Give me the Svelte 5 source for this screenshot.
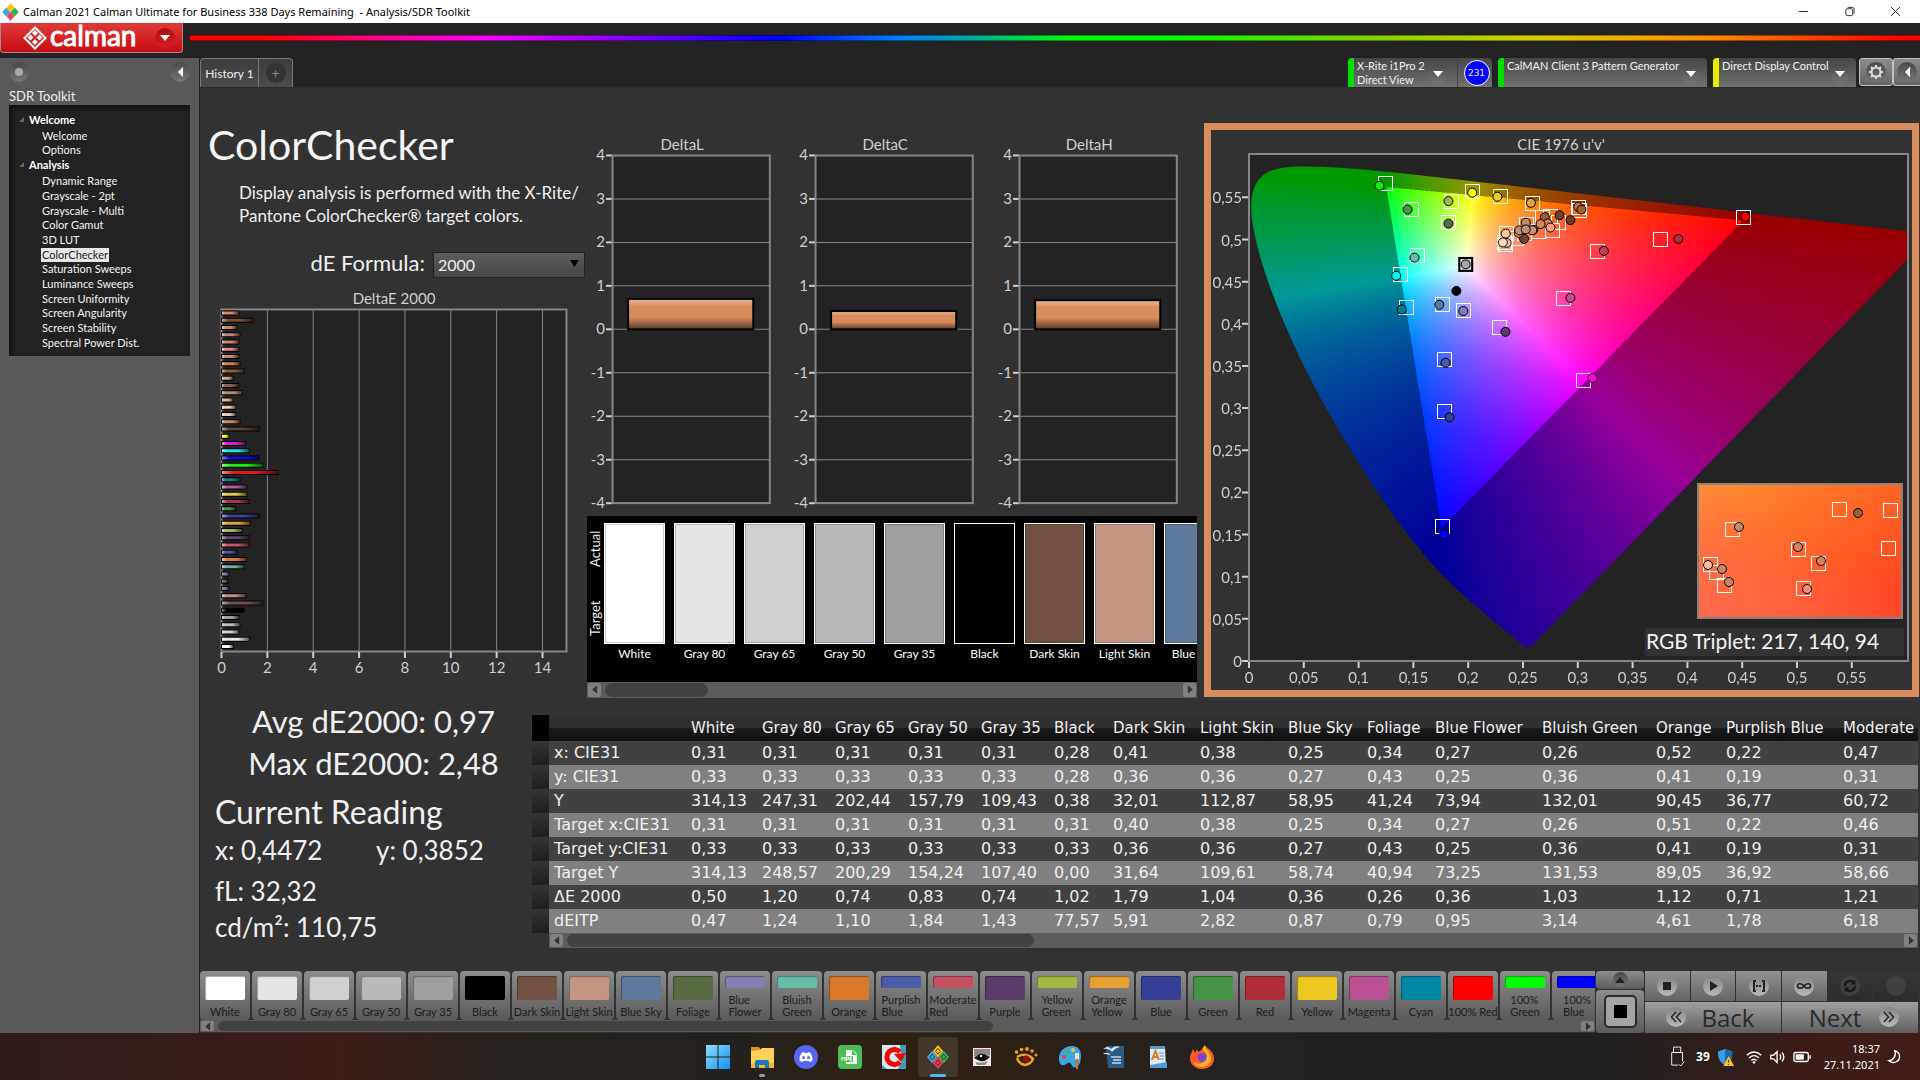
<script>
  const sections = [
    { title: 'Welcome', items: ['Welcome', 'Options'] },
    {
      title: 'Analysis',
      items: ['Dynamic Range', 'Grayscale - 2pt', 'Grayscale - Multi', 'Color Gamut', '3D LUT', 'ColorChecker',
        'Saturation Sweeps', 'Luminance Sweeps', 'Screen Uniformity', 'Screen Angularity', 'Screen Stability', 'Spectral Power Dist.']
    }
  ];

  // DeltaE 2000 per patch, top to bottom
  const deltaE = [
    [0.75, '#d8895c'], [1.37, '#7a5138'], [0.67, '#c98a66'], [0.8, '#b98774'], [0.75, '#c0906c'], [0.75, '#e0907c'],
    [0.75, '#c9856c'], [0.8, '#d0845c'], [0.98, '#96603c'], [0.5, '#d8a284'], [0.75, '#8a6448'], [0.9, '#b98c66'],
    [0.5, '#eab090'], [0.62, '#f4c8a8'], [0.62, '#f0c8b0'], [0.8, '#c48c70'], [1.63, '#5e4436'], [0.32, '#ffff20'],
    [1.06, '#e818e0'], [1.2, '#18e8f0'], [1.63, '#1010e0'], [1.8, '#20f020'], [2.46, '#e81818'], [0.8, '#207c8c'],
    [1.1, '#b45c94'], [1.1, '#e0c850'], [1.2, '#a83848'], [0.62, '#4c9450'], [1.63, '#3c4490'], [1.24, '#e0a444'],
    [0.9, '#a4b850'], [1.2, '#604870'], [1.2, '#c05868'], [0.67, '#505c9c'], [1.1, '#d87c38'], [0.98, '#68b4a0'],
    [0.32, '#8480ac'], [0.28, '#5c6c4c'], [0.32, '#607898'], [1.06, '#c49484'], [1.8, '#745448'], [0.98, '#040404'],
    [0.75, '#a0a0a0'], [0.8, '#bcbcbc'], [0.75, '#d0d0d0'], [1.2, '#e6e6e6'], [0.5, '#ffffff']
  ];

  const deltas = [
    { name: 'DeltaL', value: 0.7 },
    { name: 'DeltaC', value: 0.42 },
    { name: 'DeltaH', value: 0.67 }
  ];

  const patches = [
    ['White', '#ffffff'], ['Gray 80', '#e6e6e6'], ['Gray 65', '#d0d0d0'], ['Gray 50', '#bababa'], ['Gray 35', '#9f9f9f'],
    ['Black', '#000000'], ['Dark Skin', '#735142'], ['Light Skin', '#c49682'], ['Blue Sky', '#5e7a9c'], ['Foliage', '#596b41'],
    ['Blue Flower', '#8280b0', 1], ['Bluish Green', '#63bfa8', 1], ['Orange', '#d97828'], ['Purplish Blue', '#4a5ba8', 1],
    ['Moderate Red', '#c45262', 1], ['Purple', '#5c3c6a'], ['Yellow Green', '#9fba42', 1], ['Orange Yellow', '#e6a230', 1],
    ['Blue', '#343e96'], ['Green', '#479448'], ['Red', '#b02e38'], ['Yellow', '#edc820'], ['Magenta', '#bb5294'],
    ['Cyan', '#0088a6'], ['100% Red', '#ff0000'], ['100% Green', '#00ff00', 1], ['100% Blue', '#0000ff', 1]
  ];
  const compared = patches.slice(0, 9);

  const columns = [
    ['White', 71], ['Gray 80', 73], ['Gray 65', 73], ['Gray 50', 73], ['Gray 35', 73], ['Black', 59], ['Dark Skin', 87],
    ['Light Skin', 88], ['Blue Sky', 79], ['Foliage', 68], ['Blue Flower', 107], ['Bluish Green', 114], ['Orange', 70],
    ['Purplish Blue', 117], ['Moderate Red', 130]
  ];
  const rows = [
    ['x: CIE31', '0,31 0,31 0,31 0,31 0,31 0,28 0,41 0,38 0,25 0,34 0,27 0,26 0,52 0,22 0,47'],
    ['y: CIE31', '0,33 0,33 0,33 0,33 0,33 0,28 0,36 0,36 0,27 0,43 0,25 0,36 0,41 0,19 0,31'],
    ['Y', '314,13 247,31 202,44 157,79 109,43 0,38 32,01 112,87 58,95 41,24 73,94 132,01 90,45 36,77 60,72'],
    ['Target x:CIE31', '0,31 0,31 0,31 0,31 0,31 0,31 0,40 0,38 0,25 0,34 0,27 0,26 0,51 0,22 0,46'],
    ['Target y:CIE31', '0,33 0,33 0,33 0,33 0,33 0,33 0,36 0,36 0,27 0,43 0,25 0,36 0,41 0,19 0,31'],
    ['Target Y', '314,13 248,57 200,29 154,24 107,40 0,00 31,64 109,61 58,74 40,94 73,25 131,53 89,05 36,92 58,66'],
    ['ΔE 2000', '0,50 1,20 0,74 0,83 0,74 1,02 1,79 1,04 0,36 0,26 0,36 1,03 1,12 0,71 1,21'],
    ['dEITP', '0,47 1,24 1,10 1,84 1,43 77,57 5,91 2,82 0,87 0,79 0,95 3,14 4,61 1,78 6,18']
  ].map(([name, cells]) => ({ name, cells: cells.split(' ') }));

  // Chromaticity plot: size of the plotting area and scale per u' / v' unit
  const PW = 659, PH = 507, SU = 1096, SV = 843;
  const px = (u) => u * SU;
  const py = (v) => PH - v * SV;
  const fmt = (n) => String(Math.round(n * 100) / 100).replace('.', ',');
  const ticks = Array.from({ length: 12 }, (_, i) => i * 0.05);

  const targets = [
    [0.124, 0.566], [0.1475, 0.535], [0.184, 0.545], [0.2033, 0.556], [0.2288, 0.5505], [0.2586, 0.5423], [0.3, 0.537],
    [0.301, 0.534], [0.182, 0.519], [0.1535, 0.48], [0.138, 0.4575], [0.143, 0.419], [0.1757, 0.422], [0.195, 0.4156],
    [0.2283, 0.3945], [0.1777, 0.3575], [0.1777, 0.2955], [0.1757, 0.1594], [0.3046, 0.3325], [0.2866, 0.429],
    [0.3172, 0.4856], [0.375, 0.5], [0.4508, 0.525], [0.275, 0.5268], [0.2815, 0.52], [0.2765, 0.51], [0.253, 0.517],
    [0.267, 0.5255], [0.2346, 0.5065], [0.233, 0.496], [0.2335, 0.493], [0.244, 0.501], [0.2505, 0.5065], [0.264, 0.5085]
  ];
  const readings = [
    [0.119, 0.5637, '#14f014'], [0.1447, 0.5355, '#4a9448'], [0.182, 0.5455, '#9fba42'], [0.2037, 0.5555, '#ffff00'],
    [0.2266, 0.5507, '#edc820'], [0.2572, 0.5435, '#e6a230'], [0.3004, 0.5388, '#c8743a'], [0.3033, 0.5355, '#a06030'],
    [0.182, 0.5188, '#596b41'], [0.151, 0.4785, '#63bfa8'], [0.1343, 0.457, '#00f4f4'], [0.1393, 0.417, '#007c94'],
    [0.1737, 0.4226, '#5e7a9c'], [0.1955, 0.4152, '#8280b0'], [0.234, 0.3905, '#5c3c6a'], [0.1793, 0.3537, '#4a5ba8'],
    [0.183, 0.289, '#343e96'], [0.1782, 0.1505, '#0000ff'], [0.3134, 0.3357, '#ff00e0'], [0.2933, 0.4307, '#bb5294'],
    [0.3238, 0.4865, '#c43c52'], [0.3917, 0.5007, '#b02e38'], [0.4528, 0.527, '#ff0000'], [0.1892, 0.439, '#000000'],
    [0.251, 0.5007, '#6a4636'], [0.2833, 0.5288, '#6e4428'], [0.2933, 0.523, '#6a3c20'], [0.27, 0.5265, '#96603c'],
    [0.2725, 0.519, '#d8805c'], [0.266, 0.5183, '#d8895c'], [0.275, 0.5142, '#ff9c80'], [0.2595, 0.5115, '#c98a66'],
    [0.246, 0.508, '#d8a284'], [0.2465, 0.5108, '#c48c70'], [0.2525, 0.52, '#c0906c'], [0.2585, 0.511, '#c49682'],
    [0.2525, 0.512, '#c08c74'], [0.235, 0.496, '#f4c8a8'], [0.2342, 0.507, '#ffc89c'], [0.2316, 0.4965, '#ffd8b4']
  ];
  // Magnified view markers, in pixels of the inset
  const zoomTargets = [[141, 26], [192, 27], [190, 65], [34, 46], [100, 66], [120, 80], [105, 105], [12, 81], [18, 89], [26, 102]];
  const zoomReadings = [
    [160, 29, '#96603c'], [41, 43, '#c0906c'], [100, 63, '#d0845c'], [123, 77, '#d8805c'], [109, 105, '#f0907c'],
    [10, 81, '#f8b890'], [24, 85, '#c98a66'], [31, 98, '#c9856c']
  ];

  const locusXY = [
    [0.1741, 0.005], [0.1714, 0.0051], [0.1644, 0.0109], [0.1566, 0.0177], [0.144, 0.0297], [0.1355, 0.0399],
    [0.1241, 0.0578], [0.1096, 0.0868], [0.0913, 0.1327], [0.0687, 0.2007], [0.0454, 0.295], [0.0235, 0.4127],
    [0.0082, 0.5384], [0.0039, 0.6548], [0.0139, 0.7502], [0.0389, 0.812], [0.0743, 0.8338], [0.1142, 0.8262],
    [0.1547, 0.8059], [0.2296, 0.7543], [0.3016, 0.6923], [0.3731, 0.6245], [0.4441, 0.5547], [0.5125, 0.4866],
    [0.5752, 0.4242], [0.627, 0.3725], [0.6658, 0.334], [0.6915, 0.3083], [0.719, 0.2809], [0.7347, 0.2653]
  ];
  const locus = locusXY.map(([x, y]) => {
    const d = -2 * x + 12 * y + 3;
    return [px((4 * x) / d), py((9 * y) / d)];
  });

  let canvas = $state();

  $effect(() => {
    const k = 2;
    const w = PW * k, h = PH * k;
    const off = document.createElement('canvas');
    off.width = w;
    off.height = h;
    const octx = off.getContext('2d');
    const img = octx.createImageData(w, h);
    for (let j = 0; j < h; j++) {
      const v = Math.max((PH - j / k) / SV, 0.002);
      for (let i = 0; i < w; i++) {
        const u = i / k / SU;
        const X = (9 * u) / (4 * v), Z = (12 - 3 * u - 20 * v) / (4 * v);
        let r = 3.2406 * X - 1.5372 - 0.4986 * Z;
        let g = -0.9689 * X + 1.8758 + 0.0415 * Z;
        let b = 0.0557 * X - 0.204 + 1.057 * Z;
        const inside = r >= 0 && g >= 0 && b >= 0;
        r = Math.max(r, 0); g = Math.max(g, 0); b = Math.max(b, 0);
        const m = Math.max(r, g, b, 1e-6);
        const f = inside ? 255 : 153;
        const o = (j * w + i) * 4;
        img.data[o] = f * Math.pow(r / m, 0.8);
        img.data[o + 1] = f * Math.pow(g / m, 0.8);
        img.data[o + 2] = f * Math.pow(b / m, 0.8);
        img.data[o + 3] = 255;
      }
    }
    octx.putImageData(img, 0, 0);
    const ctx = canvas.getContext('2d');
    ctx.beginPath();
    locus.forEach(([x, y], i) => {
      if (i === 0) return ctx.moveTo(x, y);
      const prev = locus[i - 1];
      if (i === 1) return ctx.lineTo(x, y);
      ctx.quadraticCurveTo(prev[0], prev[1], (prev[0] + x) / 2, (prev[1] + y) / 2);
    });
    const last = locus[locus.length - 1];
    ctx.lineTo(last[0], last[1]);
    ctx.closePath();
    ctx.clip();
    ctx.drawImage(off, 0, 0, PW, PH);
  });
</script>

{#snippet scroller(label, thumb)}
  <div class="scroller">
    <button class="sarrow" aria-label="{label}: scroll left"><svg viewBox="0 0 14 14"><path d="M10 1v12L3 7z" /></svg></button>
    <div class="track"><div class="thumb" style="width:{thumb}%"></div></div>
    <button class="sarrow" aria-label="{label}: scroll right"><svg viewBox="0 0 14 14"><path d="M4 1v12l7-6z" /></svg></button>
  </div>
{/snippet}

{#snippet calmanMark()}
  <path fill="#ffc20e" d="M12 0l5.500 6.500L12 13 6.500 6.500z" />
  <path fill="#35a8e0" d="M6 6l5.500 6.500L6 19 .5 12.500z" />
  <path fill="#2fb34a" d="M18 6l5.500 6.500L18 19l-5.500-6.500z" />
  <path fill="#ef3e5b" d="M12 12l5.500 6.500L12 25l-5.500-6.500z" />
{/snippet}

<div class="app">
  <header class="titlebar">
    <svg class="appicon" viewBox="0 0 24 25">{@render calmanMark()}</svg>
    <span class="wtitle">Calman 2021 Calman Ultimate for Business 338 Days Remaining&nbsp; - Analysis/SDR Toolkit</span>
    <div class="winbtns">
      <button aria-label="Minimize"><svg viewBox="0 0 12 12"><path d="M1 6h10" /></svg></button>
      <button aria-label="Restore"><svg viewBox="0 0 12 12"><path d="M2 4.500a1.500 1.500 0 0 1 1.500-1.500H8a1.500 1.500 0 0 1 1.500 1.500V9A1.500 1.500 0 0 1 8 10.500H3.500A1.500 1.500 0 0 1 2 9zM4 1.500h5a2 2 0 0 1 2 2v5" /></svg></button>
      <button aria-label="Close"><svg viewBox="0 0 12 12"><path d="M1 1l10 10M11 1L1 11" /></svg></button>
    </div>
  </header>

  <div class="brandbar">
    <button class="brand">
      <svg class="mark" viewBox="0 0 24 24">
        <path fill="none" stroke="#fff" stroke-width="2" d="M12 1.500L22.500 12 12 22.500 1.500 12z" />
        <path fill="#fff" d="M12 4l3 3-3 3-3-3zM7.500 8.500l3 3-3 3-3-3zM16.500 8.500l3 3-3 3-3-3zM12 13l3 3-3 3-3-3z" />
      </svg>
      <span>calman</span>
      <i class="round red"><svg viewBox="0 0 10 6"><path fill="#fff" d="M0 0h10L5 6z" /></svg></i>
    </button>
    <div class="rainbow"></div>
  </div>

  <div class="body">
    <aside>
      <div class="sidetop">
        <button class="round dotbtn" aria-label="Pin panel"><i></i></button>
        <button class="round" aria-label="Collapse panel"><svg viewBox="0 0 8 14"><path fill="#fff" d="M7 1v12L1 7z" /></svg></button>
      </div>
      <div class="sidename">SDR Toolkit</div>
      <nav>
        {#each sections as s}
          <div class="sect"><svg viewBox="0 0 6 6"><path fill="#666" d="M6 0v6H0z" /></svg><b>{s.title}</b></div>
          <ul class:short={s.items.length < 3}>
            {#each s.items as it}
              <li><a href="#top" class:active={it === 'ColorChecker'}>{it}</a></li>
            {/each}
          </ul>
        {/each}
      </nav>
    </aside>

    <div class="work">
      <div class="tabs">
        <button class="tab first">History 1</button>
        <button class="tab add" aria-label="Add tab"><i class="round dim">+</i></button>
        <div class="devices">
          <div class="device meter">
            <span class="led"></span>
            <span class="dname">X-Rite i1Pro 2<br />Direct View</span>
            <button class="round" aria-label="Meter menu"><svg viewBox="0 0 10 6"><path fill="#fff" d="M0 0h10L5 6z" /></svg></button>
            <span class="count"><b>231</b></span>
          </div>
          <div class="device source">
            <span class="led"></span>
            <span class="dname">CalMAN Client 3 Pattern Generator</span>
            <button class="round" aria-label="Source menu"><svg viewBox="0 0 10 6"><path fill="#fff" d="M0 0h10L5 6z" /></svg></button>
          </div>
          <div class="device display">
            <span class="led yellow"></span>
            <span class="dname">Direct Display Control</span>
            <button class="round" aria-label="Display menu"><svg viewBox="0 0 10 6"><path fill="#fff" d="M0 0h10L5 6z" /></svg></button>
          </div>
          <button class="sqbtn" aria-label="Settings">
            <i class="round"><svg class="gear" viewBox="0 0 16 16"><circle cx="8" cy="8" r="4.500" fill="none" stroke="#ddd" stroke-width="2" /><path stroke="#ddd" stroke-width="2.200" d="M8 1v2M8 13v2M1 8h2M13 8h2M3 3l1.500 1.500M11.500 11.500L13 13M13 3l-1.500 1.500M4.500 11.500L3 13" /></svg></i>
          </button>
          <button class="sqbtn last" aria-label="Show panel"><i class="round"><svg viewBox="0 0 8 14"><path fill="#fff" d="M7 1v12L1 7z" /></svg></i></button>
        </div>
      </div>

      <main id="top">
        <div class="upper">
          <section class="intro">
            <h1>ColorChecker</h1>
            <p>Display analysis is performed with the X-Rite/<br />Pantone ColorChecker® target colors.</p>
            <div class="formula">
              <label for="de">dE Formula:</label>
              <div class="selwrap">
                <select id="de"><option>2000</option></select>
                <svg viewBox="0 0 10 8"><path d="M0 0h10L5 8z" /></svg>
              </div>
            </div>
            <svg class="chart" viewBox="0 0 387 403">
              <defs>
                <linearGradient id="sheen" x1="0" x2="1" y1="0" y2="0">
                  <stop offset="0" stop-color="#fff" stop-opacity=".5" />
                  <stop offset=".2" stop-color="#fff" stop-opacity="0" />
                  <stop offset=".6" stop-color="#000" stop-opacity="0" />
                  <stop offset="1" stop-color="#000" stop-opacity=".6" />
                </linearGradient>
                <linearGradient id="sheenV" x1="0" x2="0" y1="0" y2="1">
                  <stop offset="0" stop-color="#fff" stop-opacity=".4" />
                  <stop offset=".25" stop-color="#fff" stop-opacity="0" />
                  <stop offset=".6" stop-color="#000" stop-opacity="0" />
                  <stop offset="1" stop-color="#000" stop-opacity=".6" />
                </linearGradient>
              </defs>
              <text x="194" y="19" text-anchor="middle">DeltaE 2000</text>
              <rect x="21.500" y="24.500" width="345" height="342" fill="#232323" stroke="#868686" stroke-width="2" />
              {#each [0, 2, 4, 6, 8, 10, 12, 14] as t}
                {#if t}<path class="grid" d="M{21.5 + t * 22.93} 25V366" />{/if}
                <path class="tick" d="M{21.5 + t * 22.93} 367v6" />
                <text x={21.5 + t * 22.93} y="388" text-anchor="middle">{t}</text>
              {/each}
              {#each deltaE as [v, c], i}
                {@const y = 25.5 + i * 7.25}
                <rect x="21" {y} width={v * 22.93 + 1} height="5" fill="#000" />
                <rect x="22" y={y + 1} width={v * 22.93 - 1} height="3" fill={c} />
                <rect x="22" y={y + 1} width={v * 22.93 - 1} height="3" fill="url(#sheen)" />
              {/each}
            </svg>
          </section>

          <section class="middle">
            <div class="deltas">
              {#each deltas as d}
                <svg class="chart" viewBox="0 0 203 380">
                  <text x="95" y="20" text-anchor="middle">{d.name}</text>
                  <rect x="25.500" y="25.500" width="157" height="347" fill="#232323" />
                  {#each [4, 3, 2, 1, 0, -1, -2, -3, -4] as t}
                    {@const y = 199 - t * 43.4}
                    <path class="grid" d="M26 {y}h156" />
                    <path class="tick" d="M19 {y}h6" />
                    <text x="18" y={y + 5} text-anchor="end">{t}</text>
                  {/each}
                  <rect x="25.500" y="25.500" width="157" height="347" fill="none" stroke="#868686" stroke-width="2" />
                  <rect x="41" y={199 - d.value * 43.4} width="125" height={d.value * 43.4} fill="#d98c5e" />
                  <rect x="41" y={199 - d.value * 43.4} width="125" height={d.value * 43.4} fill="url(#sheenV)" stroke="#000" stroke-width="2" />
                </svg>
              {/each}
            </div>
            <div class="compare">
              <div class="strip">
                <div class="side"><span>Target</span><span>Actual</span></div>
                {#each compared as [n, c]}
                  <div class="cmp"><div class="cbox" style="background:{c}"></div><span>{n}</span></div>
                {/each}
              </div>
              {@render scroller('Swatches', 18)}
            </div>
          </section>

          <section class="cie">
            <div class="frame">
              <svg class="chart" viewBox="0 0 701 560">
                <text x="350" y="20" text-anchor="middle">CIE 1976 u'v'</text>
                <rect x="38" y="24" width={PW} height={PH} fill="#232323" />
                <foreignObject x="38" y="24" width={PW} height={PH}>
                  <canvas bind:this={canvas} width={PW} height={PH}></canvas>
                </foreignObject>
                <rect x="38" y="24" width={PW} height={PH} fill="none" stroke="#868686" stroke-width="2" />
                {#each ticks as t}
                  <path class="tick" d="M{38 + px(t)} 532v6M31 {24 + py(t)}h6" />
                  <text x={38 + px(t)} y="553" text-anchor="middle">{fmt(t)}</text>
                  <text x="31" y={30 + py(t)} text-anchor="end">{fmt(t)}</text>
                {/each}
                <g transform="translate(38 24)">
                  {#each targets as [u, v]}
                    <rect class="target" x={Math.round(px(u)) - 6.5} y={Math.round(py(v)) - 7.5} width="14" height="14" />
                  {/each}
                  <rect x={px(0.1973) - 6} y={py(0.471) - 6} width="13" height="13" fill="#888" stroke="#000" stroke-width="2" />
                  <rect class="target" x={px(0.1973) - 4} y={py(0.471) - 4} width="9" height="9" />
                  {#each readings as [u, v, c]}
                    <circle cx={px(u)} cy={py(v)} r="4.500" fill={c} stroke="#000" />
                  {/each}
                  <circle cx={px(0.1977)} cy={py(0.4705)} r="4.500" fill="#a8a8a8" stroke="#000" />
                </g>
                <defs>
                  <linearGradient id="inset" x1="0" y1="0" x2="1" y2="1">
                    <stop offset="0" stop-color="#ff9132" />
                    <stop offset=".5" stop-color="#ff6424" />
                    <stop offset="1" stop-color="#ff3c22" />
                  </linearGradient>
                  <linearGradient id="insetPink" x1="0" y1="1" x2=".6" y2=".4">
                    <stop offset="0" stop-color="#ff6a50" />
                    <stop offset="1" stop-color="#ff6a50" stop-opacity="0" />
                  </linearGradient>
                  <clipPath id="insetClip"><rect width="204" height="134" /></clipPath>
                </defs>
                <g transform="translate(487 354)">
                  <rect width="204" height="134" fill="url(#inset)" />
                  <rect width="204" height="134" fill="url(#insetPink)" />
                  <g clip-path="url(#insetClip)">
                    {#each zoomTargets as [x, y]}
                      <rect class="target" x={x - 6.5} y={y - 7.5} width="14" height="14" />
                    {/each}
                    {#each zoomReadings as [x, y, c]}
                      <circle cx={x} cy={y} r="4.500" fill={c} stroke="#000" />
                    {/each}
                  </g>
                  <rect width="204" height="134" fill="none" stroke="#8c8078" stroke-width="2" />
                </g>
                <rect x="434" y="498" width="259" height="28" fill="#323232" />
                <text class="triplet" x="435" y="519">RGB Triplet: 217, 140, 94</text>
              </svg>
            </div>
          </section>
        </div>

        <div class="lower">
          <section class="stats">
            <div class="big">Avg dE2000: 0,97</div>
            <div class="big">Max dE2000: 2,48</div>
            <h2>Current Reading</h2>
            <div class="xy"><span>x: 0,4472</span><span>y: 0,3852</span></div>
            <div class="val gap">fL: 32,32</div>
            <div class="val">cd/m²: 110,75</div>
          </section>
          <section class="data">
            <div class="tablebox">
              <table>
                <colgroup>
                  <col class="cgut" /><col class="cname" />
                  {#each columns as [, w]}<col style="width:{w}px" />{/each}
                </colgroup>
                <thead>
                  <tr><td class="gut"></td><td></td>{#each columns as [n]}<th scope="col">{n}</th>{/each}</tr>
                </thead>
                <tbody>
                  {#each rows as r}
                    <tr><td class="gut"></td><th scope="row">{r.name}</th>{#each r.cells as c}<td>{c}</td>{/each}</tr>
                  {/each}
                </tbody>
              </table>
            </div>
            <div class="tscroll">{@render scroller('Table', 35)}</div>
          </section>
        </div>

        <footer class="controls">
          <div class="patchcol">
            <div class="patches">
              {#each patches as [n, c, two]}
                <button class="patch" class:two><i style="background:{c}"></i><span>{n}</span></button>
              {/each}
            </div>
            {@render scroller('Patches', 57)}
          </div>
          <div class="preview">
            <button class="up" aria-label="Expand"><i class="round"><svg viewBox="0 0 10 6"><path fill="#222" d="M0 6h10L5 0z" /></svg></i></button>
            <button class="pat" aria-label="Pattern window"><i></i></button>
          </div>
          <div class="transport">
            <button aria-label="Stop"><i class="round lt"><svg viewBox="0 0 16 16"><rect x="4" y="4" width="8" height="8" fill="#222" /></svg></i></button>
            <button aria-label="Play"><i class="round lt"><svg viewBox="0 0 16 16"><path d="M5 3l8 5-8 5z" fill="#222" /></svg></i></button>
            <button aria-label="Read series"><i class="round lt"><svg viewBox="0 0 16 16"><path d="M5 3H3v10h2M11 3h2v10h-2" fill="none" stroke="#222" stroke-width="2" /><path d="M5 8h6" stroke="#222" stroke-width="2" stroke-dasharray="2 1" /></svg></i></button>
            <button aria-label="Continuous"><i class="round lt"><svg viewBox="0 0 16 16"><path d="M8 8C6 5 1.500 5 1.500 8S6 11 8 8s6.500-3 6.500 0S10 11 8 8z" fill="none" stroke="#222" stroke-width="1.600" /></svg></i></button>
            <button class="off" aria-label="Refresh"><i class="round"><svg viewBox="0 0 16 16"><path d="M3 8a5 5 0 0 1 9-3M13 8a5 5 0 0 1-9 3" fill="none" stroke="#161616" stroke-width="2.200" /><path d="M13.500 1.500v5h-5zM2.500 14.500v-5h5z" fill="#161616" /></svg></i></button>
            <button class="off" aria-label="Record"><i class="round"></i></button>
            <button class="nav back"><i class="round lt"><svg viewBox="0 0 16 16"><path d="M8 3L3.500 8 8 13M13 3L8.500 8l4.500 5" fill="none" stroke="#2c2c2c" stroke-width="1.600" /></svg></i><span>Back</span></button>
            <button class="nav next"><span>Next</span><i class="round lt"><svg viewBox="0 0 16 16"><path d="M3 3l4.500 5L3 13M8 3l4.500 5L8 13" fill="none" stroke="#2c2c2c" stroke-width="1.600" /></svg></i></button>
          </div>
        </footer>
      </main>
    </div>
  </div>

  <div class="taskbar">
    <div class="pins">
      <button aria-label="Start"><svg viewBox="0 0 24 24"><defs><linearGradient id="win" x1="0" y1="0" x2="1" y2="1"><stop offset="0" stop-color="#8fe0ff" /><stop offset="1" stop-color="#1090f0" /></linearGradient></defs><path fill="url(#win)" d="M0 0h11.500v11.500H0zM12.500 0H24v11.500H12.500zM0 12.500h11.500V24H0zM12.500 12.500H24V24H12.500z" /></svg></button>
      <button class="run" aria-label="File Explorer"><svg viewBox="0 0 24 24"><path fill="#d89a18" d="M1 2h8l2 3v5H1z" /><path fill="#ffd257" d="M1 6l9-1 2-2h12v19H1z" /><path fill="#f4b92c" d="M1 18h23v5H1z" /><path fill="#1878c8" d="M5 23v-6q0-2 2-2h10q2 0 2 2v6h-4v-3H9v3z" /></svg></button>
      <button aria-label="Discord"><svg viewBox="0 0 24 24"><circle cx="12" cy="12" r="12" fill="#5865f2" /><path fill="#fff" d="M8 7.500l2-.5.500 1h3l.5-1 2 .5c2 2.500 2.700 5 2.500 8-1 .8-2 1.200-3 1.500l-.8-1.300q-2.700.8-5.400 0L8.500 17c-1-.3-2-.7-3-1.500-.2-3 .5-5.500 2.500-8z" /><circle cx="9.500" cy="12.500" r="1.500" fill="#5865f2" /><circle cx="14.500" cy="12.500" r="1.500" fill="#5865f2" /></svg></button>
      <button aria-label="MPE"><svg viewBox="0 0 24 24"><rect width="24" height="24" rx="4" fill="#4cbc54" /><path fill="#fff" d="M8 5h7l4 4v10H8z" /><path fill="#4cbc54" d="M14 5v5h5" /><rect x="3" y="11" width="12" height="6" fill="#4cbc54" /><path stroke="#fff" fill="none" d="M4 16v-4l1.500 2L7 12v4M8.500 16v-4h2v2h-2M14 12h-2v4h2M12 14h2" /></svg></button>
      <button aria-label="Sync"><svg viewBox="0 0 24 24"><rect width="24" height="24" fill="#d8e8ee" /><path fill="#3aa0b8" d="M18 0h6v24h-8l4-8zM0 20l5 4H0z" /><path fill="none" stroke="#f00808" stroke-width="5" d="M18 17a7.500 7.500 0 1 1 0-10" /><path fill="#f00808" d="M12 9l12-1-5 9z" /></svg></button>
      <button class="on" aria-label="Calman"><svg viewBox="0 0 24 25">{@render calmanMark()}<path fill="none" stroke="#3a2c24" d="M12 3.500l2.500 3-2.500 3-2.500-3zM6 9.500l2.500 3-2.500 3-2.500-3zM18 9.500l2.500 3-2.500 3-2.500-3zM12 15.500l2.500 3-2.500 3-2.500-3z" /></svg></button>
      <button aria-label="Eye"><svg viewBox="0 0 24 24"><rect x="2" y="2" width="20" height="20" fill="#f0ecec" stroke="#401818" stroke-width="2" /><path fill="#888" d="M4 4h16v7q-8-5-16 1zM5 17q7 2 13-1l-3 4H7z" /><path fill="#222" d="M4 13q7-8 16-1-7 8-16 1z" /><circle cx="12" cy="12.500" r="3.800" fill="#000" /><circle cx="11" cy="11" r="1.200" fill="#fff" /></svg></button>
      <button aria-label="Paw"><svg viewBox="0 0 24 24"><path fill="none" stroke="#f0a020" stroke-width="2.500" d="M3 12q4-3 9-2 5 1 7 4-2 5-8 6-6-1-8-7" /><circle cx="12" cy="14" r="3.500" fill="#8a1808" /><circle cx="2.500" cy="7" r="1.800" fill="#f0a020" /><circle cx="7.500" cy="4.500" r="1.800" fill="#f0a020" /><circle cx="13" cy="4" r="1.900" fill="#f0a020" /><circle cx="18" cy="6" r="1.800" fill="#f0a020" /><circle cx="22" cy="10" r="1.500" fill="#f0a020" /></svg></button>
      <button aria-label="Paint"><svg viewBox="0 0 24 24"><path fill="#3aa8e0" d="M14 1C6 1 1 7 1 13s2 8 5 7 5-4 7-1 2 4 5 3 5-5 5-11S20 1 14 1z" /><circle cx="6" cy="12" r="2" fill="#e04838" /><circle cx="9" cy="7" r="2" fill="#48b848" /><circle cx="15" cy="5" r="2" fill="#f4c430" /><path fill="#e8e0d0" d="M17 8h4v7h-4z" /><path fill="#b87830" d="M17.500 14h3l-.5 10h-2z" /></svg></button>
      <button aria-label="Writer"><svg viewBox="0 0 24 24"><path fill="#2c5c84" d="M4 1h18v22H6z" /><path fill="#d8e8f4" d="M1 4q5-4 8 0 4-4 9-2-5 1-8 5-3-4-9-3zM1 9q4-3 8 1-4-1-8-1z" /><path stroke="#c8dcec" stroke-width="1.500" d="M9 12h10M11 15h8M10 18h9" /></svg></button>
      <button aria-label="WordPad"><svg viewBox="0 0 24 24"><path fill="#dceaf6" d="M4 1h15l1 22H4z" /><path fill="#5898d0" d="M4 1h15v3H4zM4 20l17-3v6H4z" /><path fill="none" stroke="#e07820" stroke-width="2" d="M6 15L9.500 6l3.500 9M7.500 12h4" /><path stroke="#5898d0" d="M13 8h5M14 11h4M14 14h4" /></svg></button>
      <button aria-label="Firefox"><svg viewBox="0 0 24 24"><path fill="#ff5a28" d="M12 24C5 24 0 19 0 13c0-4 2-6 3-9l2 4 2-4 1 3c3-1 4-3 7-7 1 3 9 6 9 13s-5 11-12 11z" /><path fill="#ffb82c" d="M15 0c0 5 6 7 6 13s-5 9-9 9-8-3-9-6c3 4 9 3 12 0s2-8-1-10 0-4 1-6z" /><circle cx="12" cy="12.500" r="4.500" fill="#8040d0" /></svg></button>
    </div>
    <div class="tray">
      <svg viewBox="0 0 20 24"><path d="M5 1h8v6H5zM3 7h12v10M3 7v14h7M7.500 3.500h.5M10 3.500h.5M11 20l2 2 4-5" /></svg>
      <b>39</b>
      <svg viewBox="0 0 20 24" class="shield"><path fill="#3a9ce8" stroke="none" d="M9 3l8 3c0 8-2 12-8 15C3 18 1 14 1 6z" /><path fill="#1868b0" stroke="none" d="M9 3l8 3c0 8-2 12-8 15z" /><path fill="#ffc42c" stroke="none" d="M13 11l6 11H7z" /><path stroke="#222" d="M13 15v3.500M13 20v1" /></svg>
      <svg viewBox="0 0 20 24" class="wide"><path stroke-width="1.500" d="M2 10q8-7 16 0M4.500 13q5.500-5 11 0M7 16q3-3 6 0" /><circle cx="10" cy="18" r="1" fill="#fff" /></svg>
      <svg viewBox="0 0 20 24" class="wide"><path stroke-width="1.500" d="M2 10h3l4-4v12l-4-4H2zM12 9q2 3 0 6M14.500 7q4 5 0 10" /></svg>
      <svg viewBox="0 0 20 24" class="wide"><rect x="1" y="7" width="16" height="10" rx="2" stroke-width="1.500" /><rect x="3" y="9" width="9" height="6" fill="#fff" stroke="none" /><path stroke-width="1.500" d="M19 10v4" /></svg>
      <div class="clock">18:37<br />27.11.2021</div>
      <svg viewBox="0 0 20 24"><path stroke-width="1.500" d="M11 5c6 2 7 9 2 12-3 2-7 1-9-1 5 0 9-5 7-11z" /></svg>
    </div>
  </div>
</div>

<style>
  :global(body) { background: #323232; }
  * { box-sizing: border-box; }
  .app { min-height: 100vh; display: flex; flex-direction: column; overflow: hidden; background: #323232; color: #f0f0f0; font-family: Lato, sans-serif; font-size: 12px; }
  button { border: 0; padding: 0; margin: 0; background: none; color: inherit; font: inherit; }
  svg { display: block; flex: none; }

  .titlebar { display: flex; align-items: center; height: 23px; background: #fff; color: #000; font: 12px "Noto Sans", sans-serif; }
  .appicon { width: 17px; height: 18px; margin: 0 4px 0 2px; }
  .wtitle { flex: 1; font-size: 11px; }
  .winbtns { display: flex; margin-right: 2px; }
  .winbtns button { width: 46px; height: 23px; display: grid; place-items: center; }
  .winbtns svg { width: 11px; height: 11px; fill: none; stroke: #222; }

  .brandbar { display: flex; height: 35px; background: #232323; }
  .brand { display: flex; align-items: center; width: 183px; height: 30px; padding: 0 7px 0 22px; background: linear-gradient(#e03a3a, #c80c10); border: 1px solid #a88; border-top: 0; border-radius: 0 0 4px 4px; }
  .brand span { flex: 1; text-align: left; font-size: 28px; line-height: 26px; padding-bottom: 5px; -webkit-text-stroke: 1px #fff; color: #fff; }
  .mark { width: 24px; height: 24px; margin-right: 3px; }
  .rainbow { flex: 1; height: 6px; margin: 12px 0 0 7px; background: linear-gradient(90deg, #f00 0%, #f00 4%, #f0f 17%, #00f 34%, #0080ff 41%, #00a8a0 45%, #0f0 51%, #0f0 57%, #7fd000 68%, #d8d000 78%, #f80 88%, #f00 99%); border-top: 1px solid #0006; border-bottom: 1px solid #0006; }

  .round { display: inline-grid; place-items: center; flex: none; width: 20px; height: 20px; border-radius: 50%; background: linear-gradient(#4a4a4a, #747474); font-style: normal; }
  .round svg { width: 10px; height: 6px; }
  .round svg[viewBox="0 0 8 14"] { width: 7px; height: 12px; }
  .round svg[viewBox="0 0 16 16"] { width: 16px; height: 16px; }
  .round.red { background: linear-gradient(#a81010, #d82020); }
  .round.dim { background: #333; color: #888; font-size: 14px; line-height: 18px; }
  .round.lt { background: linear-gradient(#848484, #b8b8b8); }

  .body { flex: 1; display: flex; }
  aside { width: 200px; flex: none; padding: 4px 9px 0 9px; background: #595959; border-right: 1px solid #222; }
  .sidetop { display: flex; justify-content: space-between; height: 20px; }
  .dotbtn i { width: 8px; height: 8px; border-radius: 50%; background: #aaa; }
  .sidename { margin-top: 6px; padding-bottom: 1px; font-size: 13px; line-height: 16px; }
  nav { height: 251px; background: #222; box-shadow: inset 3px 3px 5px #111; padding: 7px 0 6px 10px; font-size: 11px; }
  .sect { display: flex; align-items: center; gap: 4px; height: 15px; line-height: 15px; color: #fff; }
  .sect svg { width: 5px; height: 5px; }
  .sect b { padding-left: 1px; }
  ul { list-style: none; margin: 0; padding: 2px 0 0 22px; display: grid; grid-auto-rows: 1fr; height: 178px; }
  ul.short { height: 30px; }
  li { display: flex; align-items: center; white-space: nowrap; }
  li a { color: #f4f4f4; text-decoration: none; line-height: 14px; padding: 0 1px; }
  li a.active { background: #e8e8e8; color: #222; }

  .work { flex: 1; min-width: 0; display: flex; flex-direction: column; }
  .tabs { display: flex; height: 30px; background: #232323; border-bottom: 1px solid #2a2a2a; }
  .tab { background: linear-gradient(#3c3c3c, #4c4c4c); border: 1px solid #777; border-bottom: 0; }
  .tab.first { width: 59px; font-size: 12px; border-radius: 4px 0 0 0; }
  .tab.add { width: 34px; border-left: 0; border-radius: 0 4px 0 0; }
  .devices { margin-left: auto; display: flex; gap: 6px; }
  .device { display: flex; background: linear-gradient(#464646, #707070); border-radius: 4px 4px 0 0; overflow: hidden; padding: 0 6px 0 0; }
  .device .round { margin: 6px 0 0; }
  .led { width: 6px; background: #00e000; margin-right: 3px; }
  .led.yellow { background: #ecec00; }
  .dname { flex: 1; font-size: 11px; line-height: 14px; padding-top: 1px; white-space: nowrap; }
  .meter { width: 144px; padding-right: 1px; }
  .source { width: 209px; }
  .display { width: 143px; }
  .count { display: grid; place-items: center; width: 34px; margin-left: 9px; padding-left: 4px; border-left: 1px solid #444; }
  .count b { display: grid; place-items: center; width: 26px; height: 26px; border-radius: 50%; background: #00f; border: 1px solid #fff; font: 9px "DejaVu Sans", sans-serif; }
  .sqbtn { width: 34px; height: 28px; margin-left: -3px; background: linear-gradient(#8c8c8c, #666); border: 1px solid #c0c0c0; border-radius: 3px; }
  .sqbtn.last { width: 27px; margin-left: -6px; border-right: 0; border-radius: 3px 0 0 3px; }

  main { flex: 1; display: flex; flex-direction: column; }
  .upper { display: grid; grid-template-columns: minmax(0, 387fr) minmax(0, 617fr) minmax(0, 716fr); }
  .chart { width: 100%; height: auto; }
  .chart text { font-size: 15px; fill: #cfcfcf; }
  .grid { stroke: #868686; stroke-width: 1; }
  .tick { stroke: #d0d0d0; stroke-width: 2; }
  .target { fill: none; stroke: #fff; stroke-width: 1; }
  h1 { margin: 0; padding: 29px 0 0 8px; font-size: 41px; line-height: 56px; font-weight: 400; color: #f4f4f4; }
  p { margin: 8px 0 0 39px; font-size: 17px; line-height: 23px; white-space: nowrap; }
  .formula { display: flex; justify-content: flex-end; align-items: center; gap: 8px; margin: 23px 2px 9px 0; font-size: 22px; line-height: 26px; white-space: nowrap; }
  .selwrap { position: relative; width: 152px; height: 26px; }
  select { appearance: none; width: 100%; height: 100%; padding: 0 4px; font: 16px Lato, sans-serif; color: #f0f0f0; background: linear-gradient(#5c5c5c, #464646); border: 1px solid #222; border-radius: 0; }
  .selwrap svg { position: absolute; right: 6px; top: 10px; width: 9px; height: 7px; }

  .middle { padding: 42px 7px 0 0; }
  .deltas { display: grid; grid-template-columns: repeat(3, 1fr); }
  .compare { margin-top: 5px; }
  .strip { display: flex; gap: 9px; height: 166px; background: #000; overflow: hidden; padding-top: 7px; }
  .side { display: flex; justify-content: space-between; padding: 8px 0; writing-mode: vertical-rl; transform: rotate(180deg); width: 16px; height: 121px; margin-right: -8px; flex: none; font-size: 13px; line-height: 16px; }
  .cmp { width: 61px; flex: none; text-align: center; font-size: 12px; line-height: 20px; white-space: nowrap; color: #fff; }
  .cbox { height: 121px; border: 1px solid #fff; box-shadow: inset 0 0 0 1px #0003; }

  .scroller { display: flex; align-items: stretch; height: 16px; background: #5c5c5c; }
  .sarrow { width: 15px; display: grid; place-items: center; background: #808080; border-radius: 3px; border: 1px solid #5c5c5c; }
  .sarrow svg { width: 10px; height: 11px; fill: #333; }
  .track { flex: 1; padding: 1px 3px; }
  .thumb { height: 100%; background: #424242; border-radius: 7px; }

  .cie { padding: 35px 1px 0 0; }
  .frame { border: 7px solid #d98c5e; }
  canvas { display: block; width: 100%; height: 100%; }
  .chart .triplet { font-size: 21px; fill: #f4f4f4; }

  .lower { display: grid; grid-template-columns: minmax(0, 332fr) minmax(0, 1388fr); margin-top: 2px; }
  .stats { padding-left: 15px; white-space: nowrap; }
  .big { font-size: 31px; line-height: 42px; text-align: center; }
  h2 { margin: 8px 0 0; font-size: 32px; line-height: 40px; font-weight: 400; }
  .xy { display: grid; grid-template-columns: 161px 1fr; }
  .xy, .val { font-size: 26px; line-height: 36px; }
  .gap { margin-top: 5px; }
  .data { padding: 15px 2px 0 0; }
  .tablebox { overflow: hidden; }
  table { width: 1436px; table-layout: fixed; border-collapse: collapse; font: 16px "DejaVu Sans", sans-serif; }
  .cgut { width: 17px; }
  .cname { width: 137px; }
  td, th { padding: 0 0 0 5px; height: 24px; line-height: 24px; text-align: left; font-weight: 400; white-space: nowrap; }
  thead th, thead td { height: 26px; line-height: 26px; font-size: 15px; background: linear-gradient(#303030 50%, #1a1a1a 50%, #101010); }
  tbody tr { background: #414141; }
  tbody tr:nth-child(even) { background: #808080; }
  .gut { background: linear-gradient(#343434, #1e1e1e); }
  thead .gut { background: #000; }
  .tscroll { padding-left: 17px; }
  .tscroll :global(.scroller) { height: 15px; }

  .controls { display: flex; gap: 1px; height: 62px; margin: 23px 2px 0 0; }
  .patchcol { flex: 1; min-width: 0; }
  .patches { display: flex; gap: 2px; height: 49px; overflow: hidden; }
  .patch { flex: none; width: 50px; display: flex; flex-direction: column; align-items: center; justify-content: space-between; padding: 5px 0 2px; background: linear-gradient(#8c8c8c, #5a5a5a); border-radius: 4px; color: #1c1c1c; font-size: 11px; line-height: 12px; white-space: nowrap; }
  .patch i { width: 40px; height: 24px; border-radius: 2px; box-shadow: inset 1px 1px 1px #0005; }
  .patch.two span { white-space: normal; width: min-content; text-align: left; }
  .patch.two i { height: 12px; }
  .patchcol :global(.scroller) { height: 12px; }
  .preview { width: 48px; display: flex; flex-direction: column; gap: 1px; }
  .preview button { background: linear-gradient(#8c8c8c, #5c5c5c); border-radius: 4px; display: grid; place-items: center; }
  .up { height: 18px; }
  .up .round { width: 15px; height: 15px; }
  .pat { flex: 1; }
  .pat i { width: 31px; height: 31px; border: 9px solid #a4a4a4; background: #000; outline: 2px solid #2a2a2a; outline-offset: -1px; border-radius: 4px; }
  .transport { width: 273px; display: grid; grid-template-columns: repeat(6, 1fr); grid-template-rows: 30px 31px; gap: 1px; }
  .transport button { background: linear-gradient(#929292, #646464); display: flex; align-items: center; justify-content: center; }
  .transport .off { background: linear-gradient(#363636, #2c2c2c); }
  .transport .off .round { background: #404040; }
  .transport .nav { grid-column: span 3; gap: 16px; font: 24px "Open Sans", sans-serif; color: #2a2a2a; background: linear-gradient(#a0a0a0, #5e5e5e); }
  .transport .back { padding-right: 6px; }
  .transport .next { gap: 18px; padding-left: 8px; }

  .taskbar { display: grid; grid-template-columns: 1fr auto 1fr; align-items: center; height: 48px; background: linear-gradient(90deg, #2e1c1a 0%, #3c1d17 18%, #26211d 26%, #23211e 38%, #2e2113 46%, #2c2016 54%, #242220 62%, #22201f 84%, #3a1c17 94%, #401c17 100%); color: #fff; font: 12px "Noto Sans", sans-serif; }
  .pins { grid-column: 2; display: flex; gap: 4px; }
  .pins button { position: relative; width: 40px; height: 40px; display: grid; place-items: center; border-radius: 4px; }
  .pins svg { width: 24px; height: 24px; }
  .pins .on { background: #ffffff1a; }
  .pins .on::after { content: ''; position: absolute; left: 12px; bottom: 0; width: 16px; height: 3px; border-radius: 2px; background: #5ab4e8; }
  .pins .run::after { content: ''; position: absolute; left: 17px; bottom: 0; width: 6px; height: 3px; border-radius: 2px; background: #999; }
  .tray { justify-self: end; display: flex; align-items: center; gap: 5px; padding-right: 17px; }
  .tray svg { width: 18px; height: 22px; fill: none; stroke: #fff; }
  .tray .wide { margin-left: 1px; }
  .tray .shield + .wide { margin-left: 5px; }
  .tray b { font-size: 12px; margin: 0 2px 0 4px; }
  .clock { text-align: right; font-size: 11px; line-height: 16px; margin-left: 8px; }
</style>
